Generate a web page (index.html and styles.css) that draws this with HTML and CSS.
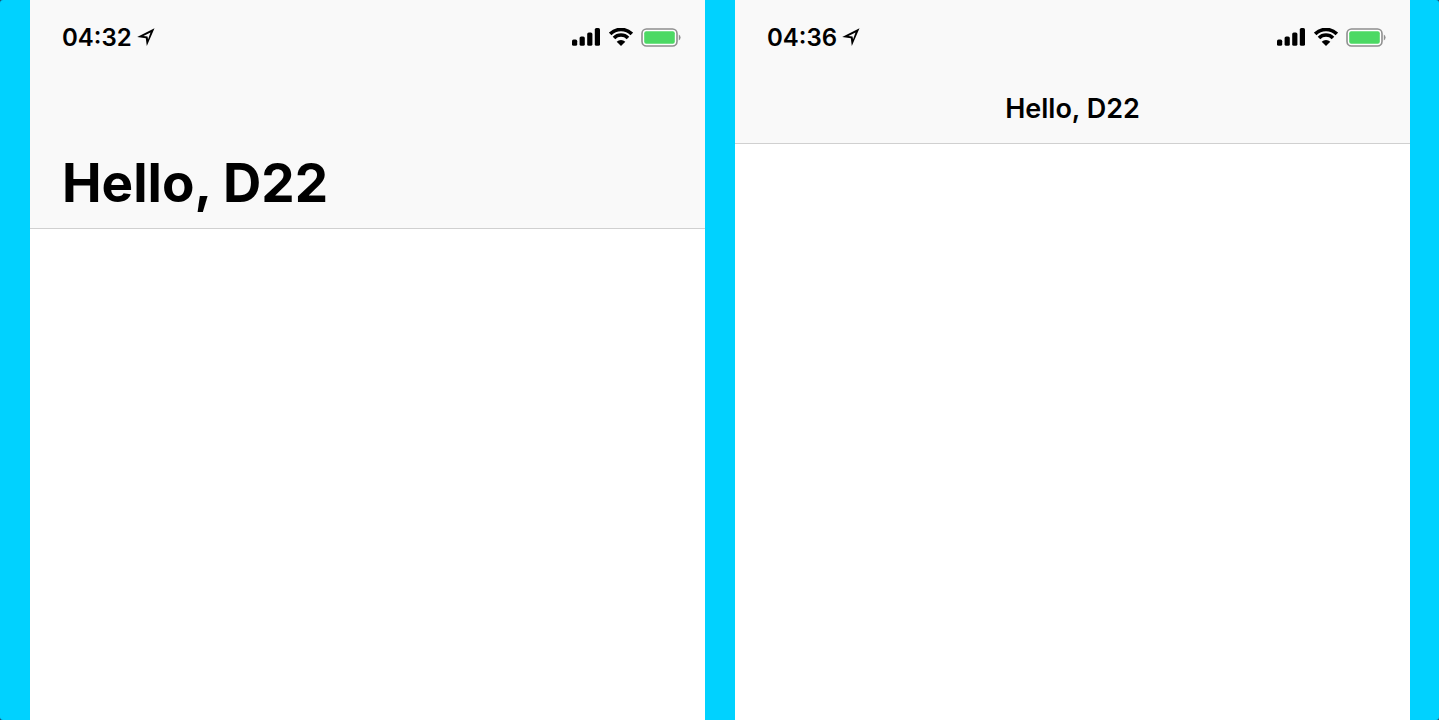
FILE: index.html
```html
<!DOCTYPE html>
<html lang="en">
<head>
  <meta charset="utf-8">
  <title>Hello, D22</title>
  <link rel="stylesheet" href="styles.css">
</head>
<body>
  <svg class="symbols" aria-hidden="true">
    <symbol id="location" viewBox="0 0 18 18">
      <path d="M17.5 0.2 L9.8 18 L8.8 10.2 L0.2 9 Z M13.5 4.4 L6.4 7.9 L10.5 8.4 L11.1 11.2 Z" fill-rule="evenodd"/>
    </symbol>
    <symbol id="signal" viewBox="0 0 28 18">
      <rect x="0" y="11.6" width="5.2" height="6.2" rx="1.6"/>
      <rect x="7.6" y="8.4" width="5.2" height="9.4" rx="1.6"/>
      <rect x="15.2" y="4.4" width="5.2" height="13.4" rx="1.6"/>
      <rect x="22.8" y="0" width="5.2" height="17.8" rx="1.6"/>
    </symbol>
    <symbol id="wifi" viewBox="0 0 24 18">
      <path d="M1.2 5.9 A15.3 15.3 0 0 1 22.8 5.9 M5 10 A9.8 9.8 0 0 1 19 10" fill="none" stroke="#000" stroke-width="3.6"/>
      <path d="M7.7 13.7 A6 6 0 0 1 16.3 13.7 L12 18 Z"/>
    </symbol>
    <symbol id="battery" viewBox="0 0 40 19">
      <rect x="1" y="1" width="35" height="17" rx="4.5" fill="#fff" stroke="#8f8f8f" stroke-width="1.6"/>
      <rect x="3.2" y="3.2" width="30.6" height="12.6" rx="2" fill="#4cd964"/>
      <path d="M37.8 6.5 Q39.6 7.5 39.6 9.5 T37.8 12.5 Z" fill="#8f8f8f"/>
    </symbol>
  </svg>

  <div class="stage">
    <section class="phone">
      <header class="navbar large">
        <div class="status">
          <span class="time">04:32</span>
          <svg class="location"><use href="#location"/></svg>
          <svg class="signal"><use href="#signal"/></svg>
          <svg class="wifi"><use href="#wifi"/></svg>
          <svg class="battery"><use href="#battery"/></svg>
        </div>
        <h1>Hello, D22</h1>
      </header>
    </section>

    <section class="phone">
      <header class="navbar compact">
        <div class="status">
          <span class="time">04:36</span>
          <svg class="location"><use href="#location"/></svg>
          <svg class="signal"><use href="#signal"/></svg>
          <svg class="wifi"><use href="#wifi"/></svg>
          <svg class="battery"><use href="#battery"/></svg>
        </div>
        <h1>Hello, D22</h1>
      </header>
    </section>
  </div>
</body>
</html>
```
FILE: styles.css
```css
body {
  margin: 0;
  background: #1c4a6e;
  color: #000;
  font-family: Inter, "Liberation Sans", sans-serif;
}

.symbols {
  display: none;
}

.stage {
  display: flex;
  gap: 30px;
  box-sizing: border-box;
  min-height: 100vh;
  padding: 0 29px 0 30px;
  background: #00d2ff;
  border-radius: 3px;
}

.phone {
  flex: 1;
  background: #fff;
}

.navbar {
  background: #f9f9f9;
  border-bottom: 1px solid #d0d0d0;
}

.status {
  display: flex;
  align-items: center;
  height: 74px;
  padding: 0 24px 0 32px;
}

.time {
  font-size: 24px;
  font-weight: 600;
  line-height: 32px;
  padding-top: 2px;
}

.location {
  width: 18px;
  height: 18px;
  margin-left: 5px;
}

.signal {
  width: 28px;
  height: 18px;
  margin-left: auto;
}

.wifi {
  width: 24px;
  height: 18px;
  margin-left: 9px;
}

.battery {
  width: 40px;
  height: 19px;
  margin-left: 8px;
}

h1 {
  margin: 0;
}

.large h1 {
  padding: 76px 32px 12px;
  font-size: 53px;
  font-weight: 700;
  line-height: 66px;
}

.compact h1 {
  padding: 18px 32px 17px;
  font-size: 27px;
  font-weight: 600;
  line-height: 34px;
  text-align: center;
}
```
